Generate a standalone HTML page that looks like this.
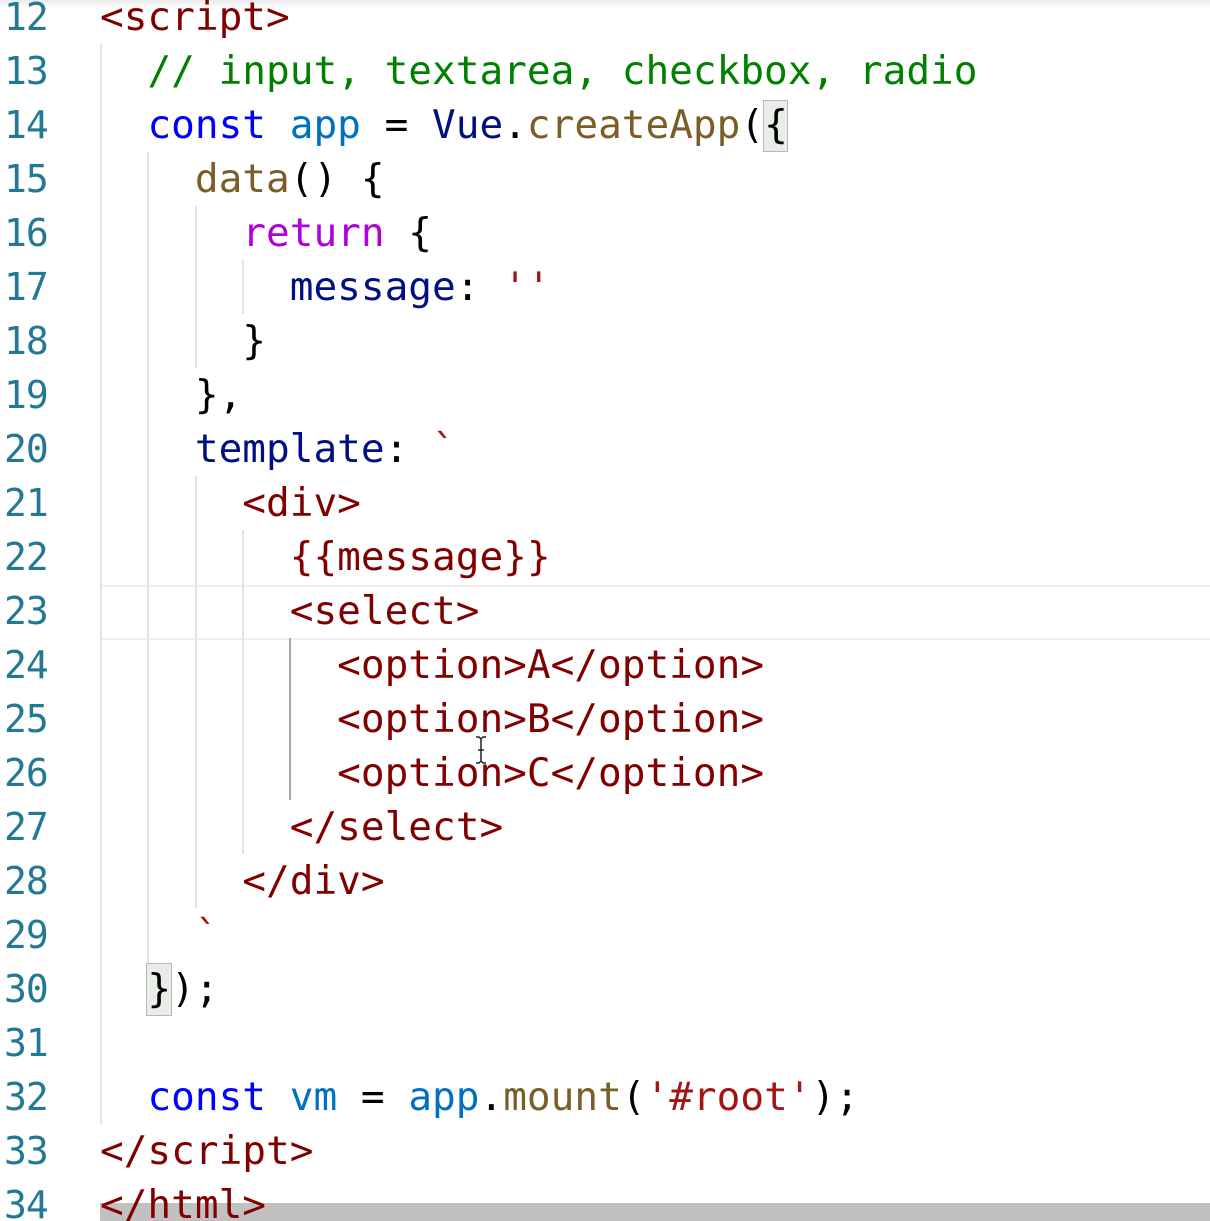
<!DOCTYPE html>
<html><head><meta charset="utf-8"><style>
html,body{margin:0;padding:0;background:#fff;width:1210px;height:1221px;overflow:hidden;position:relative}
.ln{position:absolute;left:0;width:56px;font:38px/54px "DejaVu Sans Mono","Liberation Mono",monospace;color:#237893;text-align:left;padding-left:4px;letter-spacing:-1px}
.c{position:absolute;left:100px;white-space:pre;font:39.4px/54px "DejaVu Sans Mono","Liberation Mono",monospace;color:#000}
.g{position:absolute;width:2px;background:#e2e2e2}
.t{color:#800000}.k{color:#0000ff}.v{color:#0070c1}.n{color:#001080}.f{color:#795e26}.r{color:#af00db}.cm{color:#008000}.s{color:#a31515}
.bb{position:absolute;background:#e8ede8;border:1px solid #b8b8b8;box-sizing:border-box}
</style></head><body>
<div style="position:absolute;left:0;top:0;width:1210px;height:9px;background:linear-gradient(#ececec,#fff)"></div>
<!-- current line highlight -->
<div style="position:absolute;left:100px;top:585px;width:1110px;height:51px;border-top:2px solid #eeeeee;border-bottom:2px solid #eeeeee"></div>
<!-- guides -->
<div class="g" style="left:100px;top:44px;height:1080px"></div>
<div class="g" style="left:147px;top:152px;height:864px"></div>
<div class="g" style="left:195px;top:206px;height:162px"></div>
<div class="g" style="left:195px;top:476px;height:432px"></div>
<div class="g" style="left:242px;top:260px;height:54px"></div>
<div class="g" style="left:242px;top:530px;height:324px"></div>
<div style="position:absolute;left:289px;top:638px;width:2px;height:162px;background:#a8a8a8"></div>
<!-- bracket boxes -->
<div class="bb" style="left:763px;top:100px;width:25px;height:52px"></div>
<div class="bb" style="left:146px;top:963px;width:26px;height:53px"></div>
<!-- scrollbar -->
<div style="position:absolute;left:100px;top:1203px;width:1110px;height:18px;background:#c1c1c1"></div>

<div class="ln" style="top:-10px">12</div><div class="c" style="top:-10px"><span class="t">&lt;script&gt;</span></div>
<div class="ln" style="top:44px">13</div><div class="c" style="top:44px">  <span class="cm">// input, textarea, checkbox, radio</span></div>
<div class="ln" style="top:98px">14</div><div class="c" style="top:98px">  <span class="k">const</span> <span class="v">app</span> = <span class="n">Vue</span>.<span class="f">createApp</span>({</div>
<div class="ln" style="top:152px">15</div><div class="c" style="top:152px">    <span class="f">data</span>() {</div>
<div class="ln" style="top:206px">16</div><div class="c" style="top:206px">      <span class="r">return</span> {</div>
<div class="ln" style="top:260px">17</div><div class="c" style="top:260px">        <span class="n">message</span>: <span class="s">''</span></div>
<div class="ln" style="top:314px">18</div><div class="c" style="top:314px">      }</div>
<div class="ln" style="top:368px">19</div><div class="c" style="top:368px">    },</div>
<div class="ln" style="top:422px">20</div><div class="c" style="top:422px">    <span class="n">template</span>: <span class="s">`</span></div>
<div class="ln" style="top:476px">21</div><div class="c" style="top:476px">      <span class="t">&lt;div&gt;</span></div>
<div class="ln" style="top:530px">22</div><div class="c" style="top:530px">        <span class="t">{{message}}</span></div>
<div class="ln" style="top:584px">23</div><div class="c" style="top:584px">        <span class="t">&lt;select&gt;</span></div>
<div class="ln" style="top:638px">24</div><div class="c" style="top:638px">          <span class="t">&lt;option&gt;A&lt;/option&gt;</span></div>
<div class="ln" style="top:692px">25</div><div class="c" style="top:692px">          <span class="t">&lt;option&gt;B&lt;/option&gt;</span></div>
<div class="ln" style="top:746px">26</div><div class="c" style="top:746px">          <span class="t">&lt;option&gt;C&lt;/option&gt;</span></div>
<div class="ln" style="top:800px">27</div><div class="c" style="top:800px">        <span class="t">&lt;/select&gt;</span></div>
<div class="ln" style="top:854px">28</div><div class="c" style="top:854px">      <span class="t">&lt;/div&gt;</span></div>
<div class="ln" style="top:908px">29</div><div class="c" style="top:908px">    <span class="s">`</span></div>
<div class="ln" style="top:962px">30</div><div class="c" style="top:962px">  });</div>
<div class="ln" style="top:1016px">31</div>
<div class="ln" style="top:1070px">32</div><div class="c" style="top:1070px">  <span class="k">const</span> <span class="v">vm</span> = <span class="v">app</span>.<span class="f">mount</span>(<span class="s">'#root'</span>);</div>
<div class="ln" style="top:1124px">33</div><div class="c" style="top:1124px"><span class="t">&lt;/script&gt;</span></div>
<div class="ln" style="top:1178px">34</div><div class="c" style="top:1178px"><span class="t">&lt;/html&gt;</span></div>
<!-- I-beam cursor -->
<svg style="position:absolute;left:474px;top:736px" width="14" height="28"><path d="M2 1h3l2 2l2-2h3M7 3v22M2 27h3l2-2l2 2h3M4 14h6" stroke="#222" stroke-width="1.5" fill="none"/></svg>
</body></html>
